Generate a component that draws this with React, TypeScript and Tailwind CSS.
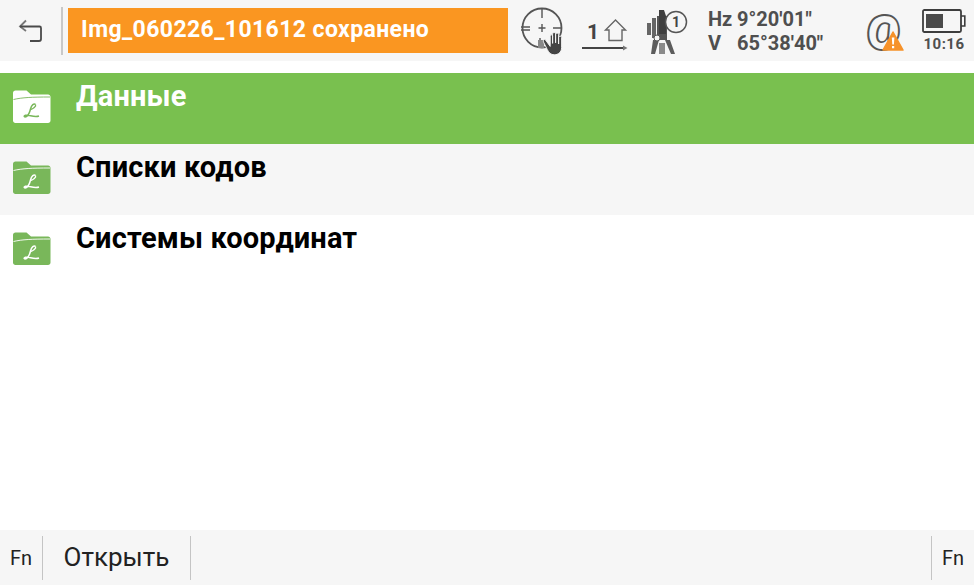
import React from "react";

function FolderIcon({ fill, script }: { fill: string; script: string }) {
  return (
    <svg width="40" height="36" viewBox="0 0 40 36" className="shrink-0">
      <path d="M1 4C1 2.500 2 1.500 3.500 1.500H14.500L19 5.500H36C37.500 5.500 38.500 6.500 38.500 8V31.500C38.500 33 37.500 34 36 34H3.500C2 34 1 33 1 31.500Z" fill={fill} />
      <path d="M1.500 10.500C10 8.500 20 8 38 8" fill="none" stroke={script} strokeWidth="0.9" />
      <path d="M23.500 15.500C22 14 19.500 16 18.500 20C17.800 23 16.800 26 14.500 27.500C12.500 28.500 11 27 13.500 26.200C17 25.500 22 28.800 27 27" fill="none" stroke={script} strokeWidth="1.500" />
      <path d="M23.500 15.500C24.500 17.500 21 20 18.500 20.500" fill="none" stroke={script} strokeWidth="1.300" />
    </svg>
  );
}

function Row({ label, active, gray }: { label: string; active?: boolean; gray?: boolean }) {
  return (
    <div className={`flex h-[71px] pl-[12px] ${active ? "bg-[#79c04f]" : gray ? "bg-[#f6f6f6]" : "bg-white"}`}>
      <div className="pt-[16px]">
        <FolderIcon fill={active ? "#ffffff" : "#79b75a"} script={active ? "#79b75a" : "#ffffff"} />
      </div>
      <div className={`ml-[24px] pt-[6px] text-[29px] leading-[34px] font-bold tracking-[0.15px] ${active ? "text-white" : "text-black"}`}>
        {label}
      </div>
    </div>
  );
}

function BackIcon() {
  return (
    <svg width="26" height="26" viewBox="0 0 26 26" fill="none" stroke="#4a4a4a" strokeWidth="1.800">
      <path d="M8 2.500L2 8.500L8 13" stroke="#777777" />
      <path d="M2 8.500H21.500C22.500 8.500 23 9 23 10V21C23 22.500 22.500 23 21 23H12" />
    </svg>
  );
}

function TargetIcon() {
  return (
    <svg width="46" height="46" viewBox="0 0 46 46" fill="none" stroke="#555555" className="shrink-0 overflow-visible">
      <circle cx="22" cy="20" r="19.500" strokeWidth="1.800" />
      <path d="M22 1V10M1 19H10M1 22H10M33 20H42M22 16V24M18.500 20H25.500M20 30V40" strokeWidth="1.400" />
      <path d="M18 32H24V40H18Z" fill="#888888" stroke="none" />
      <g transform="translate(-5.800 -8.400) scale(1.2)">
        <path d="M26 33.500L30 39V30.500C30 29 32 29 32 30.500V36.500V28.500C32 27 34.500 27 34.500 28.500V36V29C34.500 27.500 37 27.500 37 29V37V31.500C37 30 39.500 30 39.500 31.500V40C39.500 44 36.500 46 33.500 46C30.500 46 29 44.500 27.500 41.500L24.500 35.500C23.800 34 25 32.500 26 33.500Z" fill="#444444" stroke="#f5f5f5" strokeWidth="0.800" />
      </g>
    </svg>
  );
}

function HomeIcon() {
  return (
    <svg width="46" height="34" viewBox="0 0 46 34" fill="none" className="absolute left-0 top-0">
      <path d="M23.500 13.500L33.500 3.500L43.500 13.500H40V24H27V13.500Z" stroke="#666666" strokeWidth="1.400" transform="translate(0 5.500)" />
    </svg>
  );
}

function ArrowLine() {
  return (
    <svg width="46" height="6" viewBox="0 0 46 6" className="block">
      <path d="M0 3H42" stroke="#444444" strokeWidth="1.800" />
      <path d="M41 0.500L45.500 3L41 5.500Z" fill="#777777" />
    </svg>
  );
}

function InstrumentIcon() {
  return (
    <svg width="44" height="46" viewBox="0 0 44 46" className="shrink-0">
      <path d="M12 8H22V32H12Z" fill="#555555" />
      <path d="M14 2H19L21 8V26H14Z" fill="#3f3f3f" />
      <path d="M2 15H6V27H2ZM7 10H11V30H7Z" fill="#666666" />
      <path d="M8 32H14L10 46H6ZM20 32H25L30 46H26Z" fill="#5c5c5c" />
      <path d="M14 35H20V46H14Z" fill="#8a8a8a" />
      <circle cx="12" cy="30" r="3" fill="#f5f5f5" stroke="#555555" />
      <circle cx="31" cy="14" r="10.500" fill="#f5f5f5" stroke="#555555" strokeWidth="1.500" />
      <text x="31" y="19" textAnchor="middle" fontSize="14" fontWeight="700" fill="#444444" fontFamily="Roboto, sans-serif">
        1
      </text>
    </svg>
  );
}

function AtIcon() {
  return (
    <svg width="40" height="42" viewBox="0 0 40 42" className="shrink-0 overflow-visible">
      <text x="17.500" y="32" textAnchor="middle" fontSize="41" fontWeight="300" fill="#555555" fontFamily="Roboto, sans-serif">
        @
      </text>
      <path d="M27 21L37 39H17Z" fill="#f6922a" stroke="#f6922a" strokeWidth="1.500" strokeLinejoin="round" />
      <path d="M25.800 26.500H28.400L27.900 33.500H26.300ZM26 35H28.200V37.200H26Z" fill="#ffffff" />
    </svg>
  );
}

function BatteryIcon() {
  return (
    <svg width="44" height="24" viewBox="0 0 44 24" className="block">
      <path d="M2.500 1H37.500C38.500 1 39 1.500 39 2.500V21.500C39 22.500 38.500 23 37.500 23H2.500C1.500 23 1 22.500 1 21.500V2.500C1 1.500 1.500 1 2.500 1Z" fill="none" stroke="#3d3d3d" strokeWidth="1.800" />
      <path d="M39 7H42.800V17H39" fill="none" stroke="#3d3d3d" strokeWidth="1.600" />
      <rect x="4" y="5" width="17" height="14" fill="#4a4a4a" />
    </svg>
  );
}

export default function App() {
  return (
    <div className="flex h-[585px] w-[974px] flex-col overflow-hidden bg-white font-['Roboto',sans-serif]">
      <div className="flex h-[61px] items-center bg-[#f6f6f6]">
        <div className="flex w-[61px] justify-center pl-[1px]">
          <BackIcon />
        </div>
        <div className="h-[48px] w-[2px] bg-[#c8c8c8]" />
        <div className="ml-[5px] flex h-[45px] w-[440px] items-center bg-[#fa9621] pl-[13px] text-[23px] font-bold tracking-[0.4px] text-white">
          Img_060226_101612 сохранено
        </div>
        <div className="ml-[12px] mt-[1px]">
          <TargetIcon />
        </div>
        <div className="ml-[16px] flex w-[46px] flex-col">
          <div className="relative h-[34px]">
            <span className="absolute left-[5px] top-[9px] text-[21px] leading-[24px] font-bold text-[#444444]">1</span>
            <HomeIcon />
          </div>
          <ArrowLine />
        </div>
        <div className="ml-[17px]">
          <InstrumentIcon />
        </div>
        <div className="ml-[19px] w-[158px] text-[20px] leading-[24px] font-bold text-[#4f4f4f]">
          <div className="flex">
            <span className="w-[29px]">Hz</span>
            <span>9°20'01"</span>
          </div>
          <div className="flex">
            <span className="w-[29px]">V</span>
            <span>65°38'40"</span>
          </div>
        </div>
        <div className="mt-[2px]">
          <AtIcon />
        </div>
        <div className="ml-[16px] flex flex-col items-center">
          <BatteryIcon />
          <div className="mt-[3px] text-[15px] leading-[17px] font-bold tracking-[0.5px] text-[#4f4f4f]">10:16</div>
        </div>
      </div>

      <div className="mt-[12px] flex flex-col">
        <Row label="Данные" active />
        <Row label="Списки кодов" gray />
        <Row label="Системы координат" />
      </div>

      <div className="mt-auto flex h-[55px] items-center bg-[#f6f6f6] text-[#222222]">
        <div className="w-[42px] text-center text-[20px]">Fn</div>
        <div className="h-[44px] w-[1px] bg-[#c4c4c4]" />
        <div className="w-[147px] text-center text-[26px]">Открыть</div>
        <div className="h-[44px] w-[1px] bg-[#c4c4c4]" />
        <div className="ml-auto h-[44px] w-[1px] bg-[#c4c4c4]" />
        <div className="w-[42px] text-center text-[20px]">Fn</div>
      </div>
    </div>
  );
}
